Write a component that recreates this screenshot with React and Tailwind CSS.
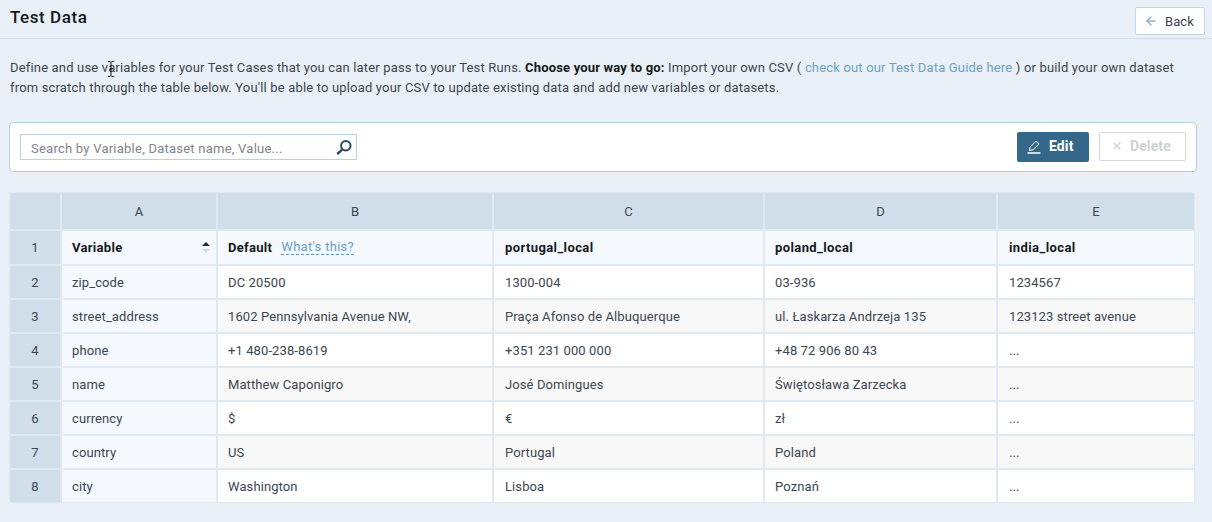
import { ArrowLeft, X } from 'lucide-react';

const columns = ['A', 'B', 'C', 'D', 'E'];

const rows = [
  ['zip_code', 'DC 20500', '1300-004', '03-936', '1234567'],
  ['street_address', '1602 Pennsylvania Avenue NW,', 'Praça Afonso de Albuquerque', 'ul. Łaskarza Andrzeja 135', '123123 street avenue'],
  ['phone', '+1 480-238-8619', '+351 231 000 000', '+48 72 906 80 43', '...'],
  ['name', 'Matthew Caponigro', 'José Domingues', 'Świętosława Zarzecka', '...'],
  ['currency', '$', '€', 'zł', '...'],
  ['country', 'US', 'Portugal', 'Poland', '...'],
  ['city', 'Washington', 'Lisboa', 'Poznań', '...'],
];

function PencilIcon() {
  return (
    <svg width="14" height="14" viewBox="0 0 14 14" fill="none" stroke="#fff" strokeWidth="1">
      <path d="M2.5 10.5 L3.2 7 L9 1.2 L12 4 L6 9.8 Z" />
      <path d="M0.5 13 H13.5" strokeWidth="1.5" />
    </svg>
  );
}

function SearchIcon() {
  return (
    <svg width="16" height="15" viewBox="0 0 16 15" fill="none" stroke="#2a4a60">
      <circle cx="9.8" cy="5.8" r="4.7" strokeWidth="2" />
      <path d="M6.2 9.6 L1.2 14" strokeWidth="2.4" />
    </svg>
  );
}

function Cursor() {
  return (
    <svg className="absolute left-[107px] top-[61px]" width="8" height="16" viewBox="0 0 8 16" fill="none" stroke="#111" strokeWidth="1">
      <path d="M1 0.5 H3.5 M4.5 0.5 H7 M4 1 V15 M1 15.5 H3.5 M4.5 15.5 H7 M2.5 8 H5.5" />
    </svg>
  );
}

function SortArrows() {
  return (
    <svg width="8" height="12" viewBox="0 0 8 12">
      <path d="M4 0 L8 4 H0 Z" fill="#1f2a33" />
      <path d="M4 11 L8 7 H0 Z" fill="#cfdcea" />
    </svg>
  );
}

export default function App() {
  return (
    <div className="relative w-[1212px] h-[522px] overflow-hidden bg-[#e9f0f7] font-['Roboto',sans-serif] text-[13px] tracking-[0.1px] text-[#3c4650]">
      <div className="flex h-[39px] justify-between border-b border-[#cfdfea] pl-[10px] pr-[7px]">
        <h1 className="pt-[5px] text-[17px] leading-[24px] font-medium tracking-[0.55px] text-[#14181c]">Test Data</h1>
        <button className="mt-[7px] flex h-[28px] w-[70px] items-center gap-[7px] rounded-[2px] border border-[#c4d7e6] bg-white pl-[8px] text-[13px] text-[#3c4650]">
          <ArrowLeft size={14} strokeWidth={2.5} className="text-[#8fb3d1]" />
          <span className="pt-px">Back</span>
        </button>
      </div>

      <p className="pl-[10px] pt-[19px] text-[13px] leading-[20px] tracking-[0.17px]">
        Define and use variables for your Test Cases that you can later pass to your Test Runs.{' '}
        <b className="font-bold text-[#14181c]">Choose your way to go:</b> Import your own CSV ({' '}
        <a className="text-[#6ba3c4]">check out our Test Data Guide here</a> ) or build your own dataset
        <br />
        from scratch through the table below. You'll be able to upload your CSV to update existing data and add new variables or datasets.
      </p>

      <div className="ml-[9px] mt-[24px] flex h-[50px] w-[1188px] items-center justify-between rounded-[4px] border border-[#b5cfe3] bg-white pl-[10px] pr-[10px]">
        <div className="flex h-[26px] w-[337px] items-center justify-between border border-[#b9d2e4] pl-[10px] pr-[4px]">
          <span className="pt-[3px] text-[13px] tracking-[0.24px] text-[#7d868e]">Search by Variable, Dataset name, Value...</span>
          <SearchIcon />
        </div>
        <div className="flex items-center gap-[10px]">
          <button className="flex h-[30px] w-[72px] items-center gap-[8px] rounded-[2px] bg-[#35678a] pb-px pl-[10px] text-[14px] font-bold text-white">
            <PencilIcon />
            Edit
          </button>
          <button className="mb-px flex h-[29px] w-[87px] items-center gap-[7px] rounded-[2px] border border-[#d5d7d9] bg-white pb-px pl-[11px] text-[14px] font-bold text-[#cfd2d4]">
            <X size={12} strokeWidth={2.5} />
            Delete
          </button>
        </div>
      </div>

      <div className="ml-[9px] mt-[20px] grid w-[1186px] grid-cols-[50px_154px_274px_269px_231px_196px] grid-rows-[36px_33px_repeat(7,32px)] gap-[2px] bg-[#dfe9f1] p-px [&>div]:flex [&>div]:items-center">
        <div className="bg-[#d0deea]" />
        {columns.map((c) => (
          <div key={c} className="justify-center bg-[#d0deea] pt-px">{c}</div>
        ))}

        <div className="justify-center bg-[#d0deea]">1</div>
        <div className="justify-between bg-[#f5f8fd] pl-[10px] pr-[6px] font-bold tracking-[0.3px] text-[#14181c]">
          Variable
          <SortArrows />
        </div>
        <div className="gap-[9px] bg-[#f5f8fd] pl-[10px] font-bold tracking-[0.3px] text-[#14181c]">
          Default
          <span className="border-b border-dashed border-[#5b9cc0] font-normal leading-[14px] text-[#6c9fca]">What's this?</span>
        </div>
        <div className="bg-[#f5f8fd] pl-[11px] font-bold tracking-[0.4px] text-[#14181c]">portugal_local</div>
        <div className="bg-[#f5f8fd] pl-[10px] font-bold tracking-[0.4px] text-[#14181c]">poland_local</div>
        <div className="bg-[#f5f8fd] pl-[11px] font-bold tracking-[0.4px] text-[#14181c]">india_local</div>

        {rows.map((row, i) => {
          const bg = i % 2 === 1 ? 'bg-[#f8f8f8]' : 'bg-white';
          return [
            <div key={`n${i}`} className="justify-center bg-[#d0deea] pt-px">{i + 2}</div>,
            <div key={`v${i}`} className="bg-[#f5f8fd] pl-[10px] pt-px">{row[0]}</div>,
            <div key={`b${i}`} className={`${bg} pl-[10px] pt-px`}>{row[1]}</div>,
            <div key={`c${i}`} className={`${bg} pl-[11px] pt-px`}>{row[2]}</div>,
            <div key={`d${i}`} className={`${bg} pl-[10px] pt-px`}>{row[3]}</div>,
            <div key={`e${i}`} className={`${bg} pl-[11px] pt-px`}>{row[4]}</div>,
          ];
        })}
      </div>

      <Cursor />
    </div>
  );
}
